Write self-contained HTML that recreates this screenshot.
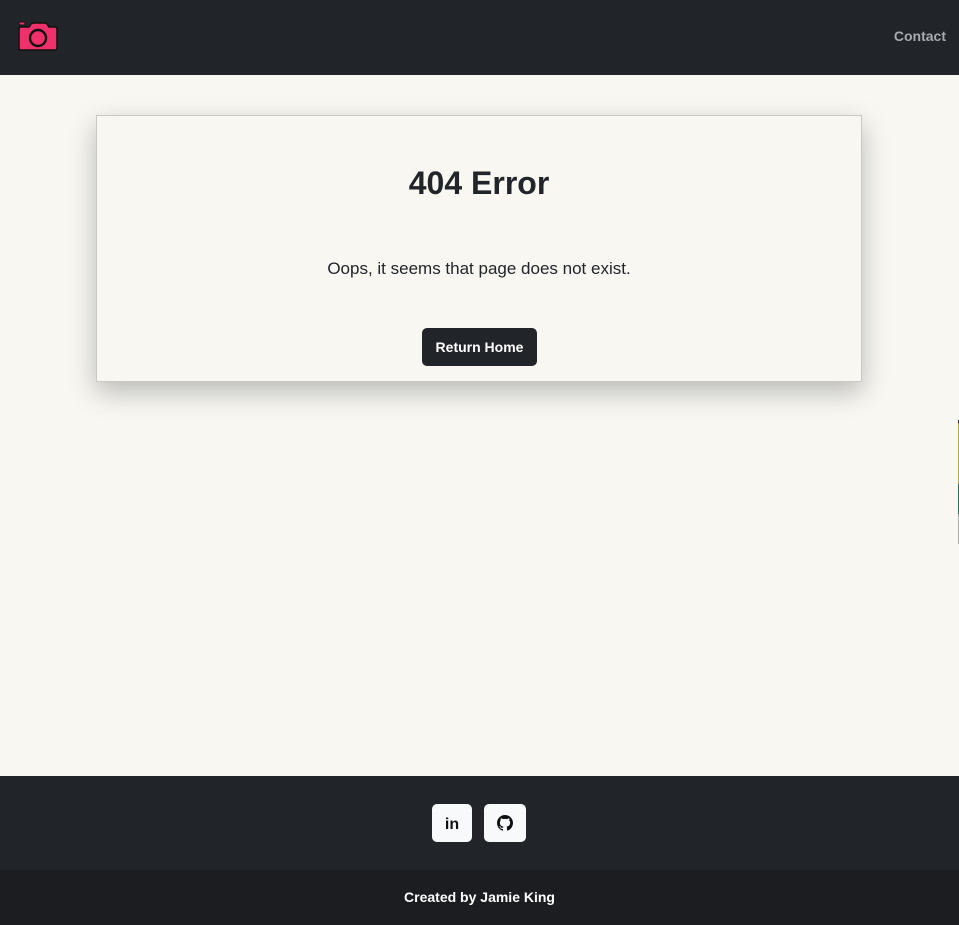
<!DOCTYPE html>
<html><head><meta charset="utf-8"><style>
*{margin:0;padding:0;box-sizing:border-box}
html,body{width:959px;height:925px;overflow:hidden}
body{background:#f8f7f2;font-family:"Liberation Sans",sans-serif;position:relative}
.nav{position:absolute;left:0;top:0;width:959px;height:75px;background:#212429}
.contact{position:absolute;right:13px;top:28px;color:#a9abae;font-size:14px;font-weight:bold}
.card{position:absolute;left:96px;top:115px;width:766px;height:267px;border:1px solid #c9c9c6;background:#f8f7f2;box-shadow:0 10px 25px rgba(0,0,0,.25);text-align:center}
h1{position:absolute;left:0;right:0;top:49px;font-size:32px;color:#212429;font-weight:bold}
.p{position:absolute;left:0;right:0;top:143px;font-size:17px;color:#212429}
.btn{position:absolute;left:325px;top:212px;width:115px;height:38px;background:#212429;border-radius:5px;color:#fff;font-size:14px;font-weight:bold;line-height:38px}
.foot{position:absolute;left:0;top:776px;width:959px;height:94px;background:#212429}
.ic{position:absolute;top:28px;height:38px;background:#f8f9fa;border-radius:5px;display:flex;align-items:center;justify-content:center}
.bot{position:absolute;left:0;top:870px;width:959px;height:55px;background:#1b1d20;color:#fff;font-size:14px;font-weight:bold;text-align:center;line-height:55px}
.strip{position:absolute;left:958px;width:1px}
</style></head><body>
<div class="nav">
<svg style="position:absolute;left:17px;top:20px" width="42" height="32" viewBox="0 0 42 32">
<rect x="2" y="2" width="6" height="3" rx="1" fill="#f0306a" stroke="#111" stroke-width="1"/>
<path d="M2 9 Q2 7 4 7 H12 L14 4 Q15 3 17 3 H27 Q29 3 30 4 L32 7 H38 Q40 7 40 9 V28 Q40 30 38 30 H4 Q2 30 2 28 Z" fill="#f0306a" stroke="#111" stroke-width="1.5"/>
<circle cx="21" cy="18" r="8" fill="none" stroke="#111" stroke-width="2.4"/>
</svg>
<div class="contact">Contact</div>
</div>
<div class="card">
<h1>404 Error</h1>
<div class="p">Oops, it seems that page does not exist.</div>
<div class="btn">Return Home</div>
</div>
<div class="strip" style="top:420px;height:3px;background:#222"></div>
<div class="strip" style="top:423px;height:61px;background:#b8a640"></div>
<div class="strip" style="top:484px;height:30px;background:#2e6b55"></div>
<div class="strip" style="top:514px;height:30px;background:#aaa"></div>
<div class="foot">
<div class="ic" style="left:432px;width:40px"><span style="font-weight:bold;font-size:16px;color:#111;position:relative;top:2px">in</span></div>
<div class="ic" style="left:484px;width:42px">
<svg width="16" height="16" viewBox="0 0 16 16"><path fill="#111" d="M8 0C3.58 0 0 3.58 0 8c0 3.54 2.29 6.53 5.47 7.59.4.07.55-.17.55-.38v-1.33c-2.23.48-2.7-1.07-2.7-1.07-.36-.93-.89-1.17-.89-1.17-.73-.5.05-.49.05-.49.8.06 1.23.83 1.23.83.72 1.23 1.88.87 2.34.67.07-.52.28-.87.51-1.07-1.78-.2-3.65-.89-3.65-3.95 0-.87.31-1.59.82-2.15-.08-.2-.36-1.02.08-2.12 0 0 .67-.21 2.2.82a7.6 7.6 0 0 1 4 0c1.53-1.04 2.2-.82 2.2-.82.44 1.1.16 1.92.08 2.12.51.56.82 1.27.82 2.15 0 3.07-1.87 3.75-3.65 3.95.29.25.54.73.54 1.48v2.2c0 .21.15.46.55.38A8 8 0 0 0 16 8c0-4.42-3.58-8-8-8z"/></svg>
</div>
</div>
<div class="bot">Created by Jamie King</div>
</body></html>
